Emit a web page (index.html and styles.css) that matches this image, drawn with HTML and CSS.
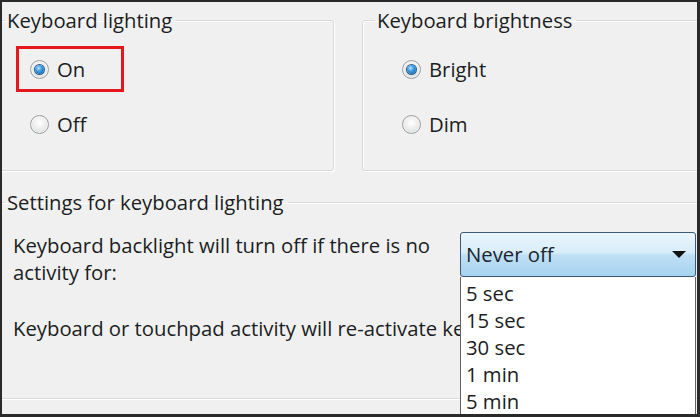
FILE: index.html
```html
<!DOCTYPE html>
<html lang="en">
<head>
  <meta charset="UTF-8" />
  <title>Keyboard lighting</title>
  <link rel="stylesheet" href="styles.css">
</head>
<body>

  <div class="frame">

    <div class="top-row">
      <fieldset class="group group-left">
        <legend>Keyboard lighting</legend>
        <div class="highlight">
          <label class="option"><span class="radio checked"></span>On</label>
        </div>
        <label class="option option-off"><span class="radio"></span>Off</label>
      </fieldset>

      <fieldset class="group group-right">
        <legend>Keyboard brightness</legend>
        <label class="option option-first"><span class="radio checked"></span>Bright</label>
        <label class="option option-second"><span class="radio"></span>Dim</label>
      </fieldset>
    </div>

    <fieldset class="group group-settings">
      <legend>Settings for keyboard lighting</legend>
      <div class="settings-row">
        <p class="setting-text">Keyboard backlight will turn off if there is no activity for:</p>
        <div class="combo">
          <div class="combo-box">
            <span>Never off</span>
            <span class="arrow"></span>
          </div>
          <ul class="combo-list">
            <li>5 sec</li>
            <li>15 sec</li>
            <li>30 sec</li>
            <li>1 min</li>
            <li>5 min</li>
          </ul>
        </div>
      </div>
      <p class="setting-text reactivate">Keyboard or touchpad activity will re-activate keyboard backlight.</p>
    </fieldset>

  </div>

</body>
</html>
```

FILE: styles.css
```css
html, body { margin: 0; background: #f0f0f0; }
body { font-family: "Open Sans", "DejaVu Sans", sans-serif; font-size: 20.3px; line-height: 27px; color: #1b1e22; }

.frame { width: 700px; height: 417px; box-sizing: border-box; border: solid #2a2a2a; border-width: 2px 3px 3px 2px; overflow: hidden; background: #f0f0f0; }

.top-row { display: flex; margin-top: 5px; }

.group { margin: 0; padding: 0; min-width: 0; border: 1px solid #d5dadf; border-radius: 3px; box-shadow: inset 1px 1px 0 #fff, 1px 1px 0 #fff; box-sizing: border-box; }
.group legend { padding: 0 4px 0 2px; }

.group-left { width: 343px; height: 164px; margin-left: -11px; }
.group-left legend { margin-left: 13px; }
.group-right { flex: 1; height: 164px; margin-left: 28px; margin-right: -12px; }
.group-right legend { margin-left: 12px; }

.option { display: flex; align-items: center; gap: 8px; height: 27px; }

.radio { width: 17px; height: 17px; border-radius: 50%; border: 1px solid #9a9ea2; background: radial-gradient(circle at 50% 40%, #ffffff 0%, #ececec 50%, #c6c8ca 100%); box-shadow: inset 0 0 0 1px #f6f6f6; display: flex; align-items: center; justify-content: center; }
.radio.checked::after { content: ""; width: 9px; height: 9px; border-radius: 50%; background: radial-gradient(circle at 40% 35%, #b6e6ff 0%, #3a9ae0 40%, #14539a 100%); box-shadow: 0 0 0 1px #2a5c8e; }

.highlight { width: 108px; height: 46px; box-sizing: border-box; border: 3px solid #e3171c; margin: 12px 0 0 24px; padding: 0 0 0 11px; display: flex; align-items: center; }
.option-off { margin: 19px 0 0 38px; }

.option-first { margin: 22px 0 0 39px; }
.option-second { margin: 28px 0 0 39px; }

.group-settings { height: 210px; margin: 18px -12px 0 -11px; }
.group-settings legend { margin-left: 13px; }

.settings-row { display: flex; align-items: flex-start; margin-top: 16px; }
.setting-text { margin: 0 0 0 21px; }
.settings-row .setting-text { width: 447px; flex: none; }
.reactivate { margin-top: 29px; width: 447px; white-space: nowrap; overflow: hidden; }

.combo { position: relative; width: 236px; }
.combo-box { height: 45px; box-sizing: border-box; border: 1px solid #3c5a76; border-radius: 3px; background: linear-gradient(#eaf5fc 0%, #d8edfa 45%, #bfe0f6 52%, #a6d2ef 100%); display: flex; align-items: center; justify-content: space-between; padding: 0 9px 0 5px; color: #1b2530; }
.arrow { width: 0; height: 0; border-left: 7px solid transparent; border-right: 7px solid transparent; border-top: 7px solid #111; }

.combo-list { position: absolute; top: 100%; left: 0; width: 100%; height: 160px; box-sizing: border-box; margin: 0; padding: 3px 0 0 5px; list-style: none; background: #fff; border: 1px solid #646464; border-top: none; z-index: 2; }
```
